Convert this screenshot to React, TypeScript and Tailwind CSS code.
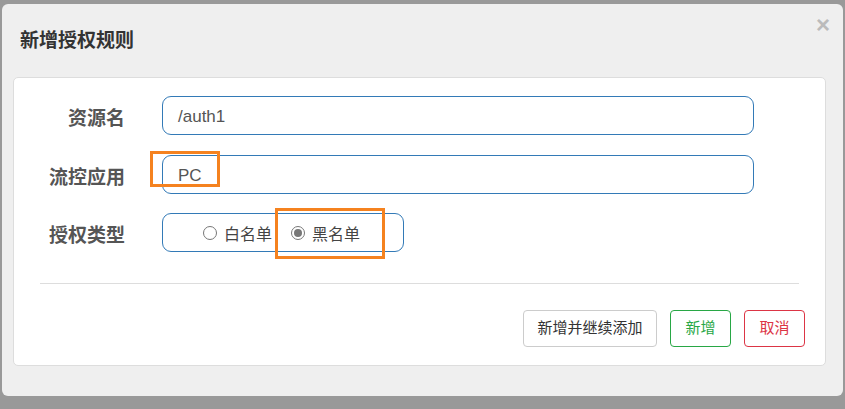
const font = { fontFamily: '"Liberation Sans", "Noto Sans CJK SC", sans-serif' };

function Radio({ checked, label }: { checked: boolean; label: string }) {
  return (
    <label className="flex items-center gap-[7px] text-[16px] text-[#444]">
      <span className="w-[14px] h-[14px] rounded-full border border-[#777] bg-white flex items-center justify-center">
        {checked && <span className="w-[8px] h-[8px] rounded-full bg-[#777]" />}
      </span>
      <span className="pt-[3px]">{label}</span>
    </label>
  );
}

export default function App() {
  return (
    <div className="w-[845px] h-[409px] bg-[#999] pl-[2px] pt-[4px] overflow-hidden" style={font}>
      <div className="w-[841px] h-[392px] bg-[#efefef] rounded-[6px] px-[11px] pt-[22px] relative">
        <button className="absolute right-[13px] top-[9px] text-[#bbb] text-[24px] leading-none font-bold">×</button>
        <h2 className="ml-[7px] text-[19px] font-bold text-[#333] leading-[30px]">新增授权规则</h2>

        <div className="mt-[21px] mr-[6px] h-[289px] bg-white border border-[#ddd] rounded-[5px] pt-[18px] relative">
          <div className="flex items-center h-[39px]">
            <div className="w-[111px] pt-[8px] text-right text-[19px] font-bold text-[#555]">资源名</div>
            <div className="ml-[37px] w-[592px] h-[39px] border border-[#337ab7] rounded-[9px] flex items-center px-[15px] pt-[2px] text-[17px] text-[#555]">
              /auth1
            </div>
          </div>
          <div className="flex items-center h-[39px] mt-[20px]">
            <div className="w-[111px] pt-[8px] text-right text-[19px] font-bold text-[#555]">流控应用</div>
            <div className="ml-[37px] w-[592px] h-[39px] border border-[#337ab7] rounded-[9px] flex items-center px-[15px] pt-[2px] text-[17px] text-[#555]">
              PC
            </div>
          </div>
          <div className="flex items-center h-[39px] mt-[19px]">
            <div className="w-[111px] pt-[8px] text-right text-[19px] font-bold text-[#555]">授权类型</div>
            <div className="ml-[37px] w-[242px] h-[39px] border border-[#337ab7] rounded-[9px] flex items-center pl-[40px] pt-[1px] gap-[19px]">
              <Radio checked={false} label="白名单" />
              <Radio checked={true} label="黑名单" />
            </div>
          </div>

          <div className="mx-[26px] mt-[31px] border-t border-[#ddd]" />

          <div className="flex justify-end gap-[13px] mr-[20px] mt-[26px]">
            <button className="h-[37px] w-[134px] bg-white border border-[#ccc] rounded-[4px] text-[15px] text-[#333]">新增并继续添加</button>
            <button className="h-[37px] w-[61px] bg-white border border-[#28a745] rounded-[4px] text-[15px] text-[#28a745]">新增</button>
            <button className="h-[37px] w-[61px] bg-white border border-[#dc3545] rounded-[4px] text-[15px] text-[#dc3545]">取消</button>
          </div>

          <div className="absolute left-[136px] top-[73px] w-[70px] h-[36px] border-[3px] border-[#f5821f]" />
          <div className="absolute left-[261px] top-[130px] w-[110px] h-[51px] border-[3px] border-[#f5821f]" />
        </div>
      </div>
    </div>
  );
}
